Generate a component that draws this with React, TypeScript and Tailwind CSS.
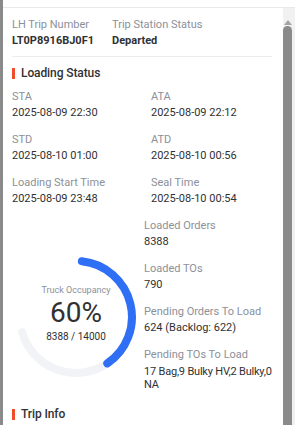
const font = { fontFamily: "Roboto, 'Liberation Sans', sans-serif" };

function Field({ label, value }: { label: string; value: string }) {
  return (
    <div>
      <div className="text-[11px] leading-[16px] text-[#8c9099]">{label}</div>
      <div className="text-[11px] leading-[16px] text-[#303133]">{value}</div>
    </div>
  );
}

function SectionTitle({ title }: { title: string }) {
  return (
    <div className="flex items-center gap-[6px] h-[18px]">
      <span className="w-[3px] h-[11px] bg-[#ee4d2d]" />
      <span className="text-[12px] font-medium tracking-[-0.1px] text-[#303133]">{title}</span>
    </div>
  );
}

function Gauge() {
  return (
    <div className="relative w-[124px] h-[124px]">
      <svg width="124" height="124" viewBox="0 0 124 124">
        <path
          d="M 93.3 108.4 A 56 56 0 0 1 8.2 77.4"
          fill="none"
          stroke="#f2f3f7"
          strokeWidth="8"
          strokeLinecap="round"
        />
        <path
          d="M 67.85 6.31 A 56 56 0 0 1 93.3 108.4"
          fill="none"
          stroke="#2f6ff5"
          strokeWidth="8"
          strokeLinecap="round"
        />
      </svg>
      <div className="absolute inset-0 flex flex-col items-center">
        <div className="mt-[29px] text-[9px] leading-[12px] text-[#8c9099]">Truck Occupancy</div>
        <div className="text-[28px] leading-[34px] text-[#303133]">60%</div>
        <div className="text-[10px] leading-[14px] text-[#303133]">8388 / 14000</div>
      </div>
    </div>
  );
}

export default function App() {
  return (
    <div className="w-[295px] h-[425px] flex overflow-hidden bg-white" style={font}>
      <div className="w-[3px] bg-[#8a8a8a]" />
      <div className="flex-1 flex flex-col min-w-0">
        <div className="h-[8px] border-b border-[#e8e9eb]" />
        <div className="flex-1 flex min-h-0">
          <div className="flex-1 pl-[9px] pr-[11px] pt-[9px]">
            {/* trip header */}
            <div className="grid grid-cols-[100px_1fr]">
              <div>
                <div className="text-[11px] leading-[16px] text-[#8c9099]">LH Trip Number</div>
                <div className="text-[11px] leading-[16px] font-bold text-[#303133]">LT0P8916BJ0F1</div>
              </div>
              <div>
                <div className="text-[11px] leading-[16px] text-[#8c9099]">Trip Station Status</div>
                <div className="text-[11px] leading-[16px] font-bold text-[#303133]">Departed</div>
              </div>
            </div>
            <div className="mt-[7px] border-t border-[#ebedf0]" />

            <div className="mt-[7px]">
              <SectionTitle title="Loading Status" />
            </div>

            <div className="mt-[7px] grid grid-cols-[139px_1fr] gap-y-[11px]">
              <Field label="STA" value="2025-08-09 22:30" />
              <Field label="ATA" value="2025-08-09 22:12" />
              <Field label="STD" value="2025-08-10 01:00" />
              <Field label="ATD" value="2025-08-10 00:56" />
              <Field label="Loading Start Time" value="2025-08-09 23:48" />
              <Field label="Seal Time" value="2025-08-10 00:54" />
            </div>

            <div className="mt-[11px] flex">
              <div className="w-[132px] pl-[2px] pt-[37px]">
                <Gauge />
              </div>
              <div className="flex-1 flex flex-col gap-[11px]">
                <Field label="Loaded Orders" value="8388" />
                <Field label="Loaded TOs" value="790" />
                <Field label="Pending Orders To Load" value="624 (Backlog: 622)" />
                <div>
                  <div className="text-[11px] leading-[16px] text-[#8c9099]">Pending TOs To Load</div>
                  <div className="text-[11px] leading-[13px] text-[#303133] mt-[2px] tracking-[-0.2px]">
                    <div className="whitespace-nowrap">17 Bag,9 Bulky HV,2 Bulky,0</div>
                    <div>NA</div>
                  </div>
                </div>
              </div>
            </div>

            <div className="mt-[14px]">
              <SectionTitle title="Trip Info" />
            </div>
          </div>

          {/* scrollbar */}
          <div className="w-[12px] bg-[#f1f1f1] flex flex-col items-start">
            <div className="h-[17px] w-full flex items-end justify-center pr-[2px]">
              <div className="w-0 h-0 border-l-[4px] border-r-[4px] border-b-[5px] border-l-transparent border-r-transparent border-b-[#a3a3a3]" />
            </div>
            <div className="mt-[1px] flex-1 w-[9px] rounded-t-[5px] bg-[#8a8a8a]" />
          </div>
        </div>
      </div>
    </div>
  );
}
